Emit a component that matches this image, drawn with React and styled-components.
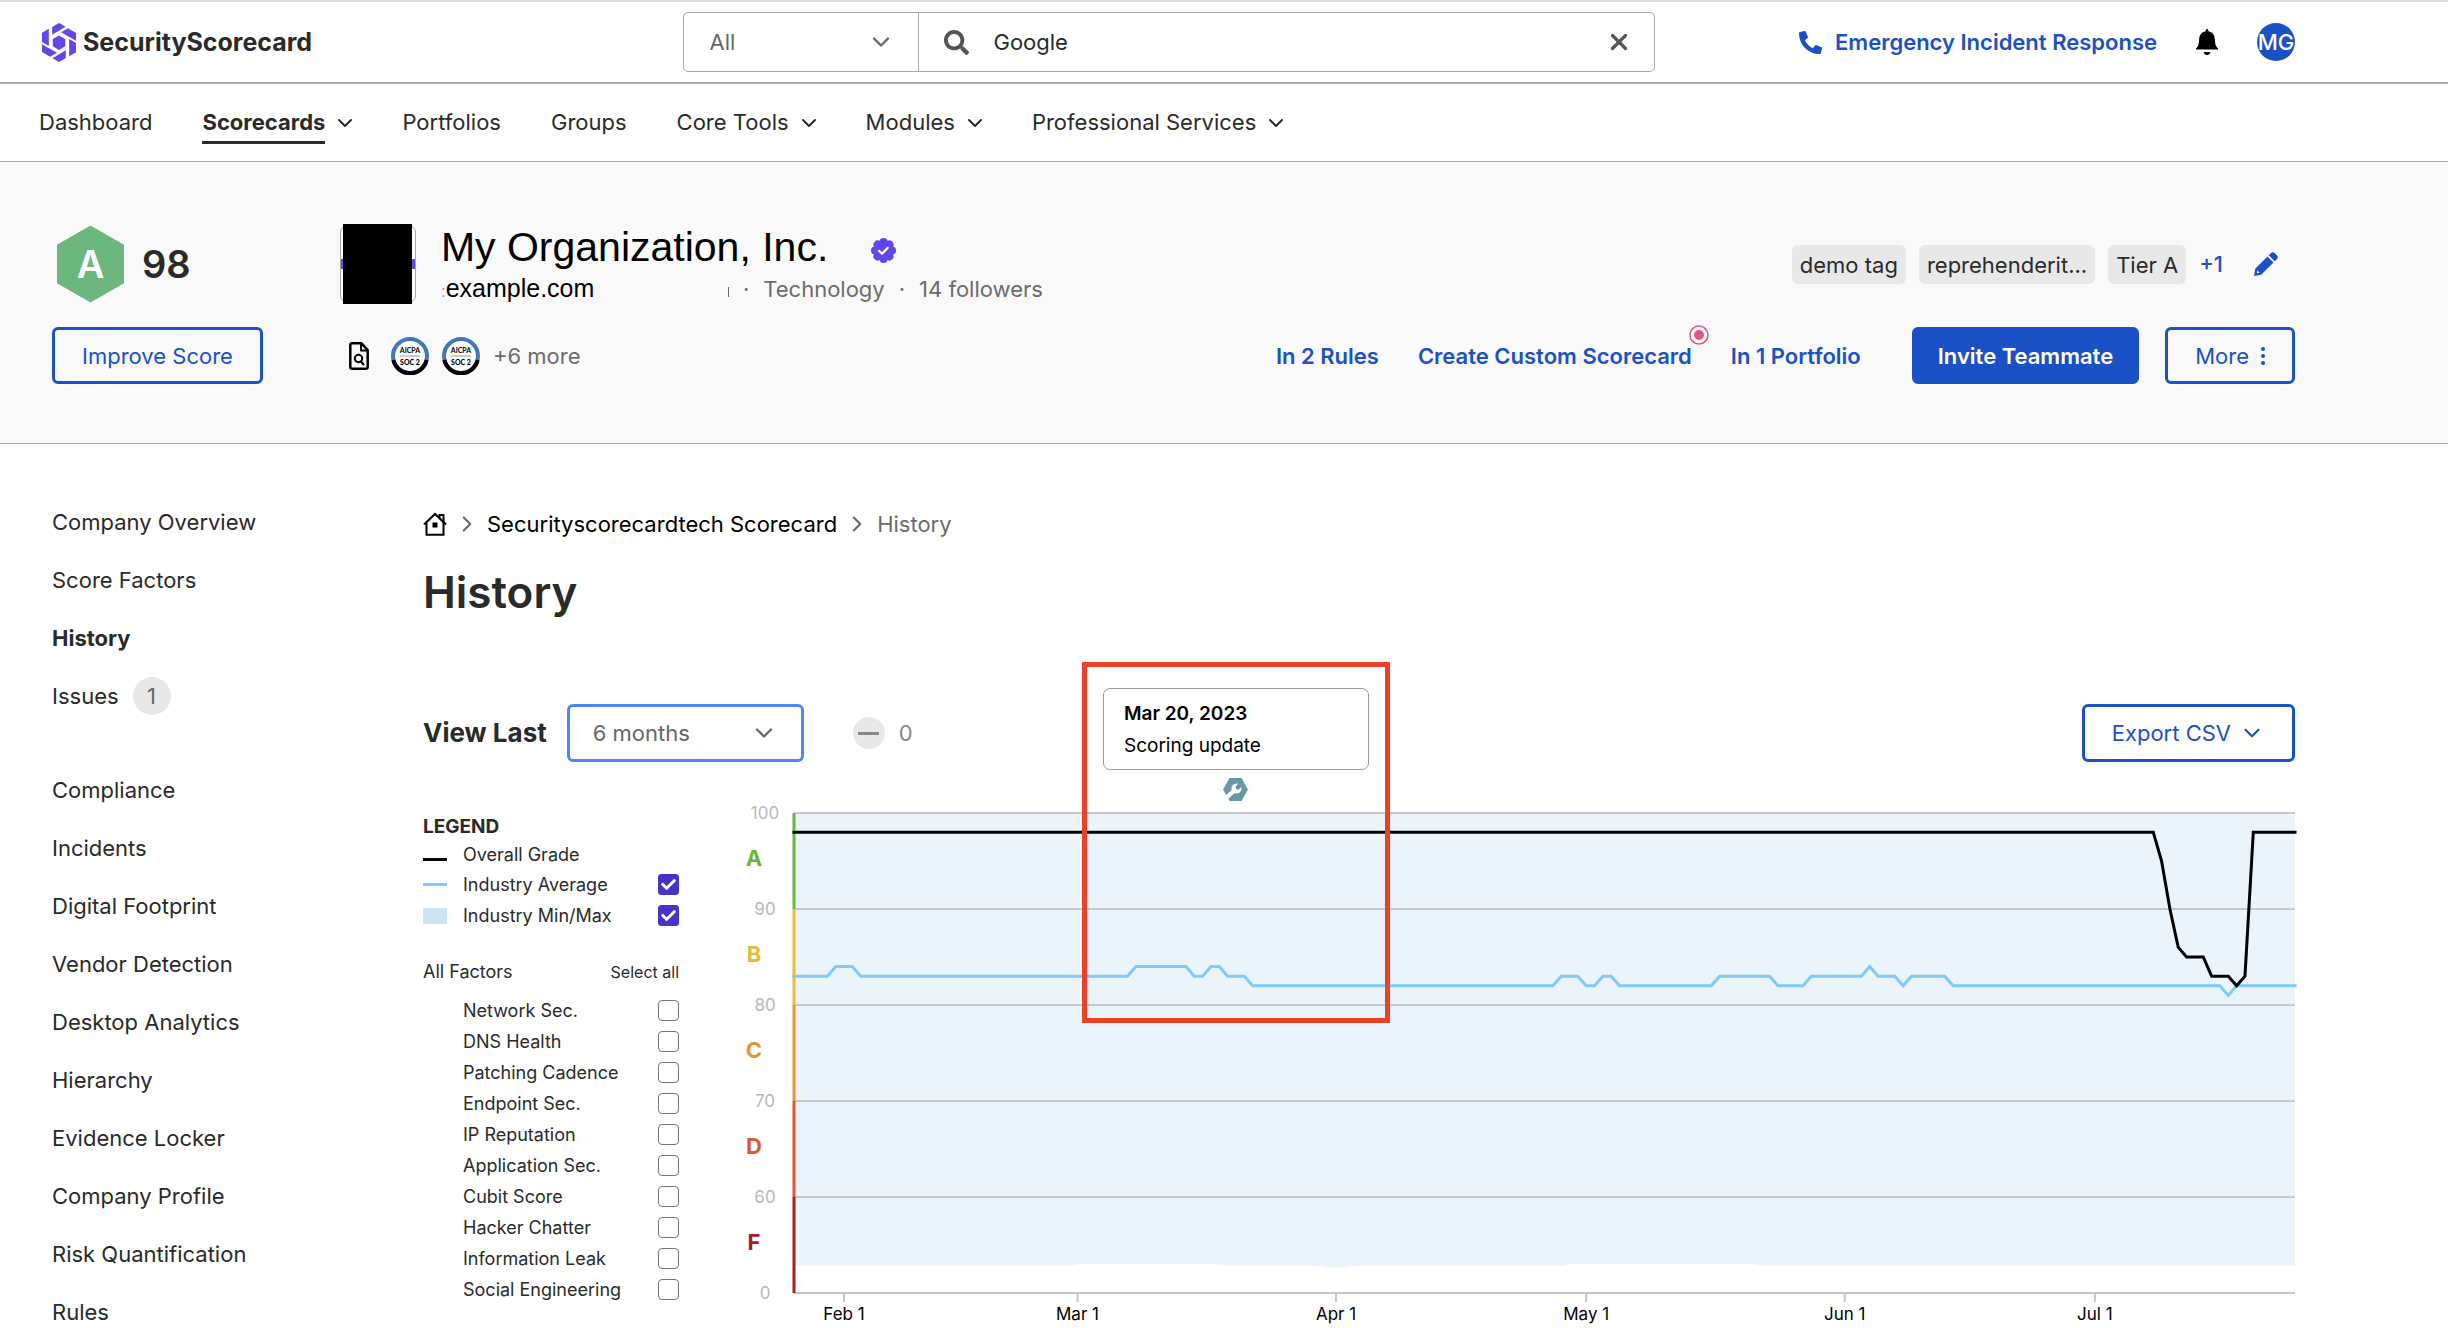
import React, { useState } from "react";
import styled, { createGlobalStyle } from "styled-components";
import { FaCheck, FaPhoneAlt, FaSearch } from "react-icons/fa";
import { ChevronDown, ChevronRight, X } from "lucide-react";

const GlobalStyle = createGlobalStyle`
  * {
    box-sizing: border-box;
  }
  body {
    margin: 0;
    background: #fff;
    color: #2a2a2a;
    font-family: Inter, "Liberation Sans", sans-serif;
    font-size: 22px;
    line-height: 34px;
    overflow-x: hidden;
  }
  button,
  input,
  select {
    font: inherit;
    color: inherit;
  }
  a {
    color: inherit;
    text-decoration: none;
  }
  svg {
    display: block;
    flex-shrink: 0;
  }
`;

/* ---------- top bar ---------- */

const Header = styled.header`
  display: grid;
  grid-template-columns: 1fr 972px 1fr;
  align-items: center;
  height: 84px;
  padding: 0 153px 0 42px;
  border-top: 2px solid #dcdcdc;
  border-bottom: 2px solid #a8a8a8;
`;

const Logo = styled.a`
  display: flex;
  align-items: center;
  gap: 7px;
  font-size: 25px;
  font-weight: 700;
`;

const SearchBar = styled.form`
  display: flex;
  height: 60px;
  border: 1px solid #a8a8a8;
  border-radius: 5px;
`;

const SelectBox = styled.div`
  display: grid;
  align-items: center;
  width: ${({ $width }) => $width}px;
  height: 58px;
  color: #666;
  ${({ $focused }) =>
    $focused
      ? "border: 3px solid #4f86f7; border-radius: 6px;"
      : "border-right: 1px solid #a8a8a8;"}
  select,
  svg {
    grid-area: 1 / 1;
  }
  select {
    appearance: none;
    width: 100%;
    height: 100%;
    padding: 0 60px 0 ${({ $focused }) => ($focused ? 23 : 26)}px;
    border: 0;
    outline: 0;
    background: transparent;
  }
  svg {
    justify-self: end;
    margin-right: 23px;
    pointer-events: none;
  }
`;

const SearchField = styled.label`
  display: flex;
  flex: 1;
  align-items: center;
  gap: 25px;
  padding: 0 22px 0 25px;
  color: #555;
  input {
    flex: 1;
    min-width: 0;
    padding: 0;
    border: 0;
    outline: 0;
    background: transparent;
    color: #2a2a2a;
  }
`;

const IconButton = styled.button`
  display: flex;
  align-items: center;
  padding: 0;
  border: 0;
  background: none;
  color: ${({ $color }) => $color};
  cursor: pointer;
`;

const HeaderActions = styled.div`
  display: flex;
  align-items: center;
  justify-content: flex-end;
  gap: 39px;
`;

const BlueLink = styled.a`
  display: flex;
  align-items: center;
  gap: 13px;
  color: #1b51c6;
  font-weight: 600;
  white-space: nowrap;
`;

const Avatar = styled.button`
  display: flex;
  align-items: center;
  justify-content: center;
  width: 38px;
  height: 38px;
  padding: 0;
  border: 0;
  border-radius: 50%;
  background: #1b51c6;
  color: #fff;
  font-weight: 500;
`;

/* ---------- navigation ---------- */

const Nav = styled.nav`
  display: flex;
  align-items: center;
  gap: 50px;
  height: 78px;
  padding: 0 39px;
  border-bottom: 1px solid #a8a8a8;
`;

const NavItem = styled.a`
  display: flex;
  align-items: center;
  gap: 8px;
  font-weight: ${({ $active }) => ($active ? 700 : 400)};
  span {
    padding: 3px 0 2px;
    border-bottom: 3px solid ${({ $active }) => ($active ? "#2a2a2a" : "transparent")};
  }
  svg {
    margin-right: -5px;
  }
`;

/* ---------- company summary ---------- */

const Summary = styled.section`
  display: flex;
  gap: 77px;
  padding: 62px 153px 59px 52px;
  background: #f9f9f9;
  border-bottom: 1px solid #a8a8a8;
`;

const SummaryColumn = styled.div`
  display: flex;
  flex-direction: column;
  gap: 23px;
  flex: ${({ $grow }) => ($grow ? 1 : "none")};
`;

const Score = styled.div`
  display: flex;
  align-items: center;
  gap: 18px;
  height: 80px;
  padding-left: 5px;
  font-size: 38px;
  font-weight: 600;
`;

const Hexagon = styled.div`
  display: flex;
  align-items: center;
  justify-content: center;
  width: 67px;
  height: 77px;
  background: #6bb77d;
  color: #fff;
  clip-path: polygon(50% 0, 100% 25%, 100% 75%, 50% 100%, 0 75%, 0 25%);
`;

const Button = styled.button`
  display: flex;
  align-items: center;
  justify-content: center;
  gap: ${({ $menu }) => ($menu ? 8 : 12)}px;
  height: ${({ $menu }) => ($menu ? 58 : 57)}px;
  padding: 0 ${({ $primary }) => ($primary ? 23 : 27)}px;
  border: 3px solid #1b51c6;
  border-radius: 6px;
  background: ${({ $primary }) => ($primary ? "#1b51c6" : "transparent")};
  color: ${({ $primary }) => ($primary ? "#fff" : "#1b51c6")};
  font-weight: ${({ $primary }) => ($primary ? 600 : 400)};
  white-space: nowrap;
  cursor: pointer;
`;

const SummaryRow = styled.div`
  display: flex;
  align-items: center;
  justify-content: space-between;
  height: ${({ $height }) => $height}px;
`;

const Company = styled.div`
  display: flex;
  align-items: center;
  gap: 25px;
`;

const CompanyLogo = styled.div`
  display: flex;
  align-items: center;
  justify-content: center;
  width: 76px;
  height: 76px;
  border: 1px solid #a8a8a8;
  border-radius: 6px;
  background: linear-gradient(#6147eb, #6147eb) center / 74px 10px no-repeat #fff;
  &::before {
    content: "";
    flex: none;
    width: 69px;
    height: 80px;
    background: #000;
  }
`;

const CompanyText = styled.div`
  display: flex;
  flex-direction: column;
  padding-top: 4px;
`;

const CompanyName = styled.h2`
  display: flex;
  align-items: center;
  gap: 43px;
  margin: 0;
  color: #000;
  font-family: "Liberation Sans", Arial, sans-serif;
  font-size: 41px;
  font-weight: 400;
  line-height: 48px;
  svg {
    margin-top: 6px;
  }
`;

const CompanyMeta = styled.div`
  display: flex;
  align-items: baseline;
  gap: 14px;
  color: #6b6b6b;
`;

const Domain = styled.span`
  width: 273px;
  color: #000;
  font-family: "Liberation Sans", Arial, sans-serif;
  font-size: 25px;
  small {
    color: #999;
    font-size: 17px;
  }
`;

const Tick = styled.span`
  width: 1px;
  height: 10px;
  background: #6b6b6b;
`;

const Tags = styled.div`
  display: flex;
  align-items: center;
  gap: 13px;
  padding-right: 17px;
`;

const Tag = styled.span`
  padding: 3px 8px 2px;
  border-radius: 6px;
  background: #e8e8e8;
`;

const MoreTags = styled.button`
  padding: 0 18px 0 0;
  border: 0;
  background: none;
  color: #1b51c6;
  font-weight: 500;
`;

const Badges = styled.div`
  display: flex;
  align-items: center;
  gap: 13px;
  padding-left: 9px;
  color: #6b6b6b;
  svg:first-child {
    margin-right: 9px;
  }
`;

const Actions = styled.div`
  display: flex;
  align-items: center;
  gap: 26px;
`;

const ActionLinks = styled.div`
  display: flex;
  gap: 39px;
  margin-right: 25px;
`;

const WithDot = styled.span`
  position: relative;
  svg {
    position: absolute;
    top: -14px;
    right: -17px;
  }
`;

/* ---------- page body ---------- */

const Body = styled.div`
  display: flex;
  padding: 61px 153px 0 52px;
`;

const Sidebar = styled.aside`
  display: flex;
  flex-direction: column;
  gap: 60px;
  width: 371px;
`;

const SideList = styled.ul`
  display: flex;
  flex-direction: column;
  gap: 24px;
  margin: 0;
  padding: 0;
  list-style: none;
`;

const SideLink = styled.a`
  display: flex;
  align-items: center;
  gap: 14px;
  height: 34px;
  font-weight: ${({ $active }) => ($active ? 700 : 400)};
`;

const Count = styled.span`
  width: 38px;
  border-radius: 50%;
  background: #e8e8e8;
  color: #666;
  line-height: 38px;
  text-align: center;
`;

const Content = styled.main`
  flex: 1;
  min-width: 0;
`;

const Breadcrumb = styled.nav`
  display: flex;
  align-items: center;
  gap: 7px;
  line-height: 38px;
  color: #6b6b6b;
  a {
    color: #000;
  }
`;

const Title = styled.h1`
  margin: 21px 0 84px;
  font-size: 44px;
  font-weight: 600;
  line-height: 56px;
`;

const Controls = styled.div`
  display: flex;
  align-items: center;
  height: 58px;
  margin-bottom: 38px;
`;

const ViewLabel = styled.label`
  margin-right: 20px;
  font-size: 26px;
  font-weight: 700;
`;

const Change = styled.div`
  display: flex;
  flex: 1;
  align-items: center;
  gap: 14px;
  margin-left: 49px;
  color: #888;
`;

const Minus = styled.span`
  display: flex;
  align-items: center;
  justify-content: center;
  width: 32px;
  height: 32px;
  border-radius: 50%;
  background: #e8e8e8;
  &::before {
    content: "";
    width: 21px;
    height: 3px;
    background: #888;
  }
`;

const History = styled.section`
  display: flex;
  gap: 61px;
`;

const Legend = styled.div`
  width: 256px;
  padding-top: 13px;
  font-size: 18px;
`;

const LegendTitle = styled.div`
  font-size: 19px;
  font-weight: 700;
  line-height: 28px;
`;

const LegendRow = styled.label`
  display: grid;
  grid-template-columns: 24px 1fr 21px;
  gap: 16px;
  align-items: ${({ $plain }) => ($plain ? "baseline" : "center")};
  height: ${({ $plain }) => ($plain ? 28 : 31)}px;
  line-height: 28px;
`;

const Swatch = styled.span`
  height: ${({ $height }) => $height}px;
  background: ${({ $color }) => $color};
`;

const CheckFrame = styled.span`
  display: grid;
  place-items: center;
  input,
  svg {
    grid-area: 1 / 1;
  }
  input {
    appearance: none;
    width: 21px;
    height: 21px;
    margin: 0;
    border: 1px solid #767676;
    border-radius: 4px;
    background: #fff;
  }
  input:checked {
    border-color: #4632cc;
    border-radius: 3px;
    background: #4632cc;
  }
  svg {
    color: #fff;
    pointer-events: none;
  }
`;

const FactorsHead = styled.div`
  display: flex;
  align-items: center;
  justify-content: space-between;
  height: 31px;
  margin: 25px 0 8px;
`;

const SelectAll = styled.button`
  padding: 0;
  border: 0;
  background: none;
  font-size: 16px;
  cursor: pointer;
`;

const ChartArea = styled.div`
  position: relative;
  flex: 1;
  min-width: 0;
  > svg {
    width: 100%;
    height: auto;
    overflow: visible;
  }
`;

const Annotation = styled.div`
  position: absolute;
  top: -138px;
  left: ${({ $left }) => $left}%;
  display: flex;
  flex-direction: column;
  gap: 8px;
  width: 308px;
  height: 361px;
  margin-left: -154px;
  padding: 21px 16px;
  border: 5px solid #ee4025;
  svg {
    align-self: center;
  }
`;

const EventCard = styled.div`
  padding: 9px 20px 7px;
  border: 1px solid #999;
  border-radius: 7px;
  background: #fff;
  color: #000;
  font-size: 19px;
  line-height: 32px;
  strong {
    display: block;
    font-weight: 600;
  }
`;

/* ---------- data ---------- */

const navItems = [
  { label: "Dashboard" },
  { label: "Scorecards", active: true, menu: true },
  { label: "Portfolios" },
  { label: "Groups" },
  { label: "Core Tools", menu: true },
  { label: "Modules", menu: true },
  { label: "Professional Services", menu: true },
];

const sideGroups = [
  ["Company Overview", "Score Factors", "History", "Issues"],
  [
    "Compliance",
    "Incidents",
    "Digital Footprint",
    "Vendor Detection",
    "Desktop Analytics",
    "Hierarchy",
    "Evidence Locker",
    "Company Profile",
    "Risk Quantification",
    "Rules",
  ],
];

const factors = [
  "Network Sec.",
  "DNS Health",
  "Patching Cadence",
  "Endpoint Sec.",
  "IP Reputation",
  "Application Sec.",
  "Cubit Score",
  "Hacker Chatter",
  "Information Leak",
  "Social Engineering",
];

// [days since Feb 1, score]
const overall = [
  [-6, 98], [157, 98], [158, 95], [159, 90], [160, 86], [161, 85], [163, 85],
  [164, 83], [166, 83], [167, 82], [168, 83], [169, 98], [174, 98],
];

const average = [
  [-6, 83], [-2, 83], [-1, 84], [1, 84], [2, 83], [34, 83], [35, 84], [41, 84],
  [42, 83], [43, 83], [44, 84], [45, 84], [46, 83], [48, 83], [49, 82], [85, 82],
  [86, 83], [88, 83], [89, 82], [90, 82], [91, 83], [92, 83], [93, 82], [104, 82],
  [105, 83], [111, 83], [112, 82], [115, 82], [116, 83], [122, 83], [123, 84],
  [124, 83], [126, 83], [127, 82], [128, 83], [132, 83], [133, 82], [165, 82],
  [166, 81], [167, 82], [174, 82],
];

const minimum = [
  [-6, 17], [27, 17], [28, 18], [45, 18], [46, 17], [57, 17], [58, 16], [60, 16],
  [61, 17], [86, 17], [87, 18], [109, 18], [110, 17], [174, 17],
];

const grades = [
  { letter: "A", top: 100, color: "#69b736" },
  { letter: "B", top: 90, color: "#e2bd3e" },
  { letter: "C", top: 80, color: "#e79432" },
  { letter: "D", top: 70, color: "#e25533" },
  { letter: "F", top: 60, color: "#a71e18" },
];

const months = [
  ["Feb 1", 0],
  ["Mar 1", 28],
  ["Apr 1", 59],
  ["May 1", 89],
  ["Jun 1", 120],
  ["Jul 1", 150],
];

/* ---------- chart ---------- */

const CHART_WIDTH = 1555;
const PLOT_LEFT = 54;
const BAND = 96;
const TOP = 13;
const BOTTOM = TOP + BAND * 5;

const xOf = (day) => PLOT_LEFT + ((day + 6) * (CHART_WIDTH - PLOT_LEFT)) / 180;
// the F band holds 60 points, the others 10 each
const yOf = (score) =>
  score >= 60
    ? TOP + ((100 - score) * BAND) / 10
    : BOTTOM - (score * BAND) / 60;
const toPoints = (series) =>
  series.map(([day, score]) => `${xOf(day)},${yOf(score)}`).join(" ");

const HistoryChart = ({ showAverage, showRange }) => (
  <svg viewBox={`0 0 ${CHART_WIDTH} 528`} role="img" aria-label="Score history">
    {showRange && (
      <polygon
        fill="#ebf3fb"
        points={`${toPoints(minimum)} ${CHART_WIDTH},${TOP} ${PLOT_LEFT},${TOP}`}
      />
    )}
    {[100, 90, 80, 70, 60, 0].map((score) => (
      <g key={score}>
        <line
          x1={PLOT_LEFT}
          x2={CHART_WIDTH}
          y1={yOf(score)}
          y2={yOf(score)}
          stroke="#c4c6c9"
          strokeWidth="2"
        />
        <text x="25" y={yOf(score) + 6} fontSize="17" fill="#b8b8b8" textAnchor="middle">
          {score}
        </text>
      </g>
    ))}
    {grades.map(({ letter, top, color }) => (
      <g key={letter}>
        <line
          x1={PLOT_LEFT}
          x2={PLOT_LEFT}
          y1={yOf(top)}
          y2={yOf(top) + BAND}
          stroke={color}
          strokeWidth="3"
        />
        <text
          x="14"
          y={yOf(top) + 53}
          fontSize="22"
          fontWeight="700"
          fill={color}
          textAnchor="middle"
        >
          {letter}
        </text>
      </g>
    ))}
    {months.map(([label, day]) => (
      <g key={label}>
        <line x1={xOf(day)} x2={xOf(day)} y1={BOTTOM} y2={BOTTOM + 9} stroke="#c4c6c9" strokeWidth="2" />
        <text x={xOf(day)} y={BOTTOM + 27} fontSize="17" fill="#000" textAnchor="middle">
          {label}
        </text>
      </g>
    ))}
    {showAverage && (
      <polyline points={toPoints(average)} fill="none" stroke="#7ecbfa" strokeWidth="3" strokeLinecap="square" />
    )}
    <polyline points={toPoints(overall)} fill="none" stroke="#000" strokeWidth="3" strokeLinecap="square" />
  </svg>
);

/* ---------- icons ---------- */

const LogoMark = () => (
  <svg width="34" height="39" viewBox="0 0 34 39" fill="#6147eb">
    <path d="M17 12.5l6.2 3.6v7.2L17 27l-6.2-3.7v-7.2z" />
    <path d="M17 0l6.6 3.8-13.4 8V4z" />
    <path d="M26 5.2l8 4.7v7.9l-15-8.6z" />
    <path d="M34 20v9.2l-6.8 4V16z" />
    <path d="M17 39l-6.6-3.8 13.4-8V35z" />
    <path d="M8 33.8l-8-4.7v-7.9l15 8.6z" />
    <path d="M0 19V9.8l6.8-4V23z" />
  </svg>
);

const BellIcon = () => (
  <svg width="22" height="26" viewBox="0 0 22 26" fill="#000">
    <path d="M11 0c.9 0 1.4.8 1.4 2.2C16.6 3 18.5 6 18.8 10c.3 5 .9 7.6 3.2 9.4v1.1H0v-1.1C2.3 17.600 2.900 15 3.200 10 3.500 6 5.400 3 9.600 2.200 9.600.8 10.100 0 11 0z" />
    <path d="M7.6 23h6.8c-.3 1.9-1.7 3-3.4 3s-3.1-1.100-3.400-3z" />
  </svg>
);

const VerifiedIcon = () => (
  <svg width="25" height="25" viewBox="0 0 25 25">
    <g fill="#6147eb">
      <circle cx="12.5" cy="12.5" r="10.5" />
      {[0, 45, 90, 135, 180, 225, 270, 315].map((angle) => (
        <circle key={angle} cx="12.5" cy="4" r="4" transform={`rotate(${angle} 12.5 12.5)`} />
      ))}
    </g>
    <path d="M8 12.8l3 3 5.8-6" fill="none" stroke="#fff" strokeWidth="2.2" strokeLinecap="round" strokeLinejoin="round" />
  </svg>
);

const PencilIcon = () => (
  <svg width="24" height="24" viewBox="0 0 24 24" fill="currentColor">
    <path d="M16.8 1.2a2.8 2.8 0 0 1 4 0l2 2a2.8 2.8 0 0 1 0 4l-2.1 2.1-6-6z" />
    <path d="M13.5 4.5l6 6L7.2 22.8 0 24l1.2-7.2zM3.4 18.4l-.6 2.9 2.9-.6z" fillRule="evenodd" />
  </svg>
);

const FileSearchIcon = () => (
  <svg width="20" height="28" viewBox="0 0 20 28" fill="none" stroke="#000" strokeWidth="2.5" strokeLinejoin="round">
    <path d="M3 1.3h9.5l6.2 6.9v16.5a2 2 0 0 1-2 2H3.3a2 2 0 0 1-2-2V3.3a2 2 0 0 1 1.7-2z" />
    <path d="M12 1.5v7h6.5" strokeWidth="2" />
    <circle cx="9.5" cy="16.5" r="3.7" strokeWidth="2" />
    <path d="M12 19.5l2.5 3" strokeWidth="2" strokeLinecap="round" />
  </svg>
);

const SocBadge = () => (
  <svg width="38" height="38" viewBox="0 0 38 38">
    <circle cx="19" cy="19" r="17" fill="#fff" stroke="#4377ba" strokeWidth="4" />
    <path d="M2.4 23a17 17 0 0 0 33.2 0" fill="none" stroke="#000" strokeWidth="4" />
    <text x="19" y="16" fontFamily="Lato, sans-serif" fontSize="7" fontWeight="700" textAnchor="middle">
      AICPA
    </text>
    <path d="M9 19h20" stroke="#999" />
    <text x="19" y="28" fontFamily="Lato, sans-serif" fontSize="7" fontWeight="900" textAnchor="middle">
      SOC 2
    </text>
  </svg>
);

const PulseDot = () => (
  <svg width="20" height="20" viewBox="0 0 20 20">
    <circle cx="10" cy="10" r="9" fill="#fff" stroke="#e0568c" strokeWidth="1.5" />
    <circle cx="10" cy="10" r="5" fill="#e0568c" />
  </svg>
);

const DotsIcon = () => (
  <svg width="4" height="18" viewBox="0 0 4 18" fill="currentColor">
    <circle cx="2" cy="2" r="2" />
    <circle cx="2" cy="9" r="2" />
    <circle cx="2" cy="16" r="2" />
  </svg>
);

const HomeIcon = () => (
  <svg width="24" height="24" viewBox="0 0 24 24" fill="none" stroke="#000" strokeWidth="2">
    <path d="M1 12.5L12 2l11 10.5" />
    <path d="M3.5 11v11.8h17V3h-4v3" />
    <path d="M9.500 10.500h5v5h-5z" fill="#000" stroke="none" />
  </svg>
);

const WrenchIcon = () => (
  <svg width="25" height="23" viewBox="0 0 25 23">
    <path d="M6.5 0h12L25 11.5 18.5 23h-12L0 11.5z" fill="#6799a0" />
    <path
      d="M2.5 17.6L8.7 12c-.8-3.2 1.3-6.4 5.3-6.5l1.2.3-2.6 3 .5 2.3 2.3.6 3-2.8c.8 3.7-1.6 6.9-5.6 6.4L11 15.6 4.9 21.5z"
      fill="#fff"
    />
  </svg>
);

const Checkbox = (props) => (
  <CheckFrame>
    <input type="checkbox" {...props} />
    {props.checked && <FaCheck size={15} />}
  </CheckFrame>
);

const App = () => {
  const [showAverage, setShowAverage] = useState(true);
  const [showRange, setShowRange] = useState(true);
  const [selected, setSelected] = useState([]);
  const [query, setQuery] = useState("Google");

  const toggleFactor = (name) =>
    setSelected((list) =>
      list.includes(name) ? list.filter((item) => item !== name) : [...list, name]
    );

  return (
    <>
      <GlobalStyle />
      <Header>
        <Logo href="#">
          <LogoMark />
          SecurityScorecard
        </Logo>
        <SearchBar onSubmit={(e) => e.preventDefault()}>
          <SelectBox $width={235}>
            <select aria-label="Search in">
              <option>All</option>
            </select>
            <ChevronDown size={28} />
          </SelectBox>
          <SearchField>
            <FaSearch size={25} />
            <input
              aria-label="Search"
              value={query}
              onChange={(e) => setQuery(e.target.value)}
            />
            <IconButton type="button" $color="#555" aria-label="Clear" onClick={() => setQuery("")}>
              <X size={26} strokeWidth={3} />
            </IconButton>
          </SearchField>
        </SearchBar>
        <HeaderActions>
          <BlueLink href="#">
            <FaPhoneAlt size={23} />
            Emergency Incident Response
          </BlueLink>
          <IconButton aria-label="Notifications">
            <BellIcon />
          </IconButton>
          <Avatar>MG</Avatar>
        </HeaderActions>
      </Header>

      <Nav>
        {navItems.map(({ label, active, menu }) => (
          <NavItem href="#" key={label} $active={active}>
            <span>{label}</span>
            {menu && <ChevronDown size={24} strokeWidth={2} />}
          </NavItem>
        ))}
      </Nav>

      <Summary>
        <SummaryColumn>
          <Score>
            <Hexagon>A</Hexagon>
            98
          </Score>
          <Button>Improve Score</Button>
        </SummaryColumn>
        <SummaryColumn $grow>
          <SummaryRow $height={80}>
            <Company>
              <CompanyLogo />
              <CompanyText>
                <CompanyName>
                  My Organization, Inc.
                  <VerifiedIcon />
                </CompanyName>
                <CompanyMeta>
                  <Domain>
                    <small>:</small>example.com
                  </Domain>
                  <Tick />
                  <span>·</span>
                  <span>Technology</span>
                  <span>·</span>
                  <span>14 followers</span>
                </CompanyMeta>
              </CompanyText>
            </Company>
            <Tags>
              <Tag>demo tag</Tag>
              <Tag>reprehenderit...</Tag>
              <Tag>Tier A</Tag>
              <MoreTags>+1</MoreTags>
              <IconButton $color="#1b51c6" aria-label="Edit tags">
                <PencilIcon />
              </IconButton>
            </Tags>
          </SummaryRow>
          <SummaryRow $height={57}>
            <Badges>
              <FileSearchIcon />
              <SocBadge />
              <SocBadge />
              <span>+6 more</span>
            </Badges>
            <Actions>
              <ActionLinks>
                <BlueLink href="#">In 2 Rules</BlueLink>
                <BlueLink href="#">
                  <WithDot>
                    Create Custom Scorecard
                    <PulseDot />
                  </WithDot>
                </BlueLink>
                <BlueLink href="#">In 1 Portfolio</BlueLink>
              </ActionLinks>
              <Button $primary>Invite Teammate</Button>
              <Button>
                More
                <DotsIcon />
              </Button>
            </Actions>
          </SummaryRow>
        </SummaryColumn>
      </Summary>

      <Body>
        <Sidebar>
          {sideGroups.map((group) => (
            <SideList key={group[0]}>
              {group.map((label) => (
                <li key={label}>
                  <SideLink href="#" $active={label === "History"}>
                    {label}
                    {label === "Issues" && <Count>1</Count>}
                  </SideLink>
                </li>
              ))}
            </SideList>
          ))}
        </Sidebar>

        <Content>
          <Breadcrumb>
            <a href="#" aria-label="Home">
              <HomeIcon />
            </a>
            <ChevronRight size={26} />
            <a href="#">Securityscorecardtech Scorecard</a>
            <ChevronRight size={26} />
            <span>History</span>
          </Breadcrumb>
          <Title>History</Title>

          <Controls>
            <ViewLabel htmlFor="period">View Last</ViewLabel>
            <SelectBox $width={237} $focused>
              <select id="period">
                <option>6 months</option>
              </select>
              <ChevronDown size={28} />
            </SelectBox>
            <Change>
              <Minus />0
            </Change>
            <Button $menu>
              Export CSV
              <ChevronDown size={26} strokeWidth={2} />
            </Button>
          </Controls>

          <History>
            <Legend>
              <LegendTitle>LEGEND</LegendTitle>
              <LegendRow as="div" $plain>
                <Swatch $height={3} $color="#000" />
                Overall Grade
              </LegendRow>
              <LegendRow>
                <Swatch $height={3} $color="#7ecbfa" />
                Industry Average
                <Checkbox checked={showAverage} onChange={() => setShowAverage(!showAverage)} />
              </LegendRow>
              <LegendRow>
                <Swatch $height={16} $color="#cbe3f0" />
                Industry Min/Max
                <Checkbox checked={showRange} onChange={() => setShowRange(!showRange)} />
              </LegendRow>
              <FactorsHead>
                All Factors
                <SelectAll onClick={() => setSelected(factors)}>Select all</SelectAll>
              </FactorsHead>
              {factors.map((name) => (
                <LegendRow key={name}>
                  <span />
                  {name}
                  <Checkbox checked={selected.includes(name)} onChange={() => toggleFactor(name)} />
                </LegendRow>
              ))}
            </Legend>

            <ChartArea>
              <HistoryChart showAverage={showAverage} showRange={showRange} />
              <Annotation $left={(xOf(47) / CHART_WIDTH) * 100}>
                <EventCard>
                  <strong>Mar 20, 2023</strong>
                  Scoring update
                </EventCard>
                <WrenchIcon />
              </Annotation>
            </ChartArea>
          </History>
        </Content>
      </Body>
    </>
  );
};

export default App;
